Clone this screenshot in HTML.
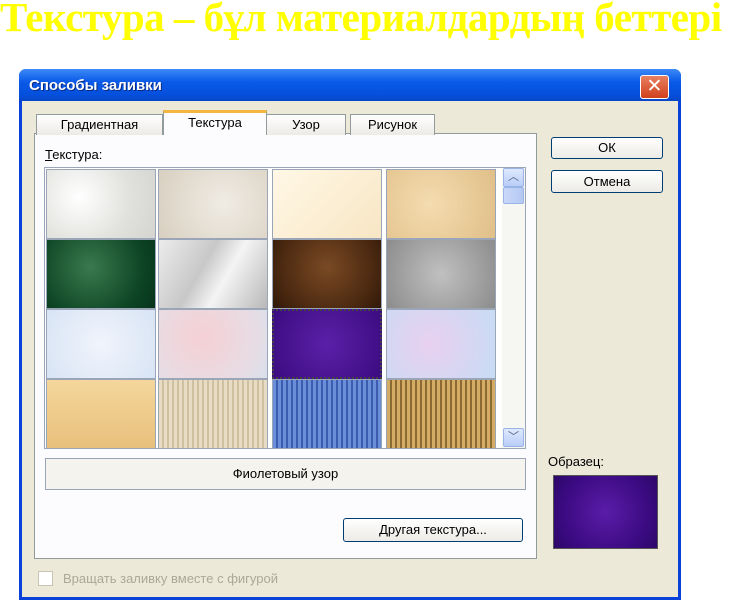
<!DOCTYPE html>
<html><head><meta charset="utf-8"><style>
*{margin:0;padding:0;box-sizing:border-box}
body{width:733px;height:600px;background:#fff;position:relative;overflow:hidden;font-family:"Liberation Sans","DejaVu Sans",sans-serif}
.ab{position:absolute}
.h{left:0;top:-7px;font:bold 41px "Liberation Serif",serif;color:#ffff00;white-space:nowrap;letter-spacing:-0.5px}
.dlg{left:19px;top:69px;width:662px;height:531px;background:#0842d8;border-radius:7px 7px 0 0}
.tb{left:19px;top:69px;width:662px;height:32px;border-radius:7px 7px 0 0;background:linear-gradient(#3d8af7,#0a5ae8 40%,#0550dc 80%,#0646c6)}
.tt{left:29px;top:77px;color:#fff;font-weight:bold;font-size:15px;text-shadow:1px 1px #0a2a80}
.x{left:640px;top:75px;width:29px;height:24px;background:linear-gradient(#e88060,#d0401c);border:1px solid #fff;border-radius:3px;color:#fff;font-size:19px;font-weight:bold;text-align:center;line-height:21px}
.bd{left:22px;top:101px;width:656px;height:496px;background:#ece9d8}
.panel{left:34px;top:133px;width:503px;height:426px;background:#fcfcfe;border:1px solid #919b9c}
.tab{top:114px;height:21px;background:linear-gradient(#fff,#ecebe6);border:1px solid #919b9c;border-bottom:none;font-size:13px;text-align:center;line-height:20px;color:#000}
.tab.act{top:110px;height:25px;background:#fcfcfe;border-top:3px solid #f3b63e}
.cell{width:110px;height:70px;border:1px solid #9aa6b8}
.btn{background:linear-gradient(#fff,#ecebe6);border:1px solid #003c74;border-radius:3px;font-size:13px;text-align:center}
</style></head><body>
<div class="ab h">Текстура – бұл материалдардың беттері</div>
<div class="ab dlg"></div>
<div class="ab tb"></div>
<div class="ab tt">Способы заливки</div>
<div class="ab x">✕</div>
<div class="ab bd"></div>
<div class="ab panel"></div>
<div class="ab tab" style="left:36px;width:127px">Градиентная</div>
<div class="ab tab" style="left:266px;width:80px">Узор</div>
<div class="ab tab" style="left:350px;width:85px">Рисунок</div>
<div class="ab tab act" style="left:163px;width:104px;line-height:20px">Текстура</div>
<div class="ab" style="left:45px;top:147px;font-size:13px"><u>Т</u>екстура:</div>
<div class="ab" style="left:44px;top:167px;width:482px;height:282px;border:1px solid #9aa6b8;background:#fff"></div>
<div class="ab cell" style="left:46px;top:169px;background:radial-gradient(circle at 30% 40%,#fff,#e0e0dc 60%,#d4d4d0)"></div>
<div class="ab cell" style="left:158px;top:169px;background:radial-gradient(circle at 60% 50%,#f0ece4,#d8cfc0)"></div>
<div class="ab cell" style="left:272px;top:169px;background:linear-gradient(135deg,#fff8e6,#f8e6c4)"></div>
<div class="ab cell" style="left:386px;top:169px;background:radial-gradient(circle at 40% 50%,#f4dcb0,#e0bf88)"></div>
<div class="ab cell" style="left:46px;top:239px;background:radial-gradient(circle at 40% 40%,#3a7a4e,#0c4424 70%,#08341c)"></div>
<div class="ab cell" style="left:158px;top:239px;background:linear-gradient(120deg,#ececec,#c8c8c8 40%,#f4f4f4 60%,#b8b8b8)"></div>
<div class="ab cell" style="left:272px;top:239px;background:radial-gradient(circle at 50% 40%,#7a4a24,#4a2810 70%,#301808)"></div>
<div class="ab cell" style="left:386px;top:239px;background:radial-gradient(circle,#c0c0c0,#8c8c8c)"></div>
<div class="ab cell" style="left:46px;top:309px;background:radial-gradient(circle,#f0f4fc,#d8e4f4)"></div>
<div class="ab cell" style="left:158px;top:309px;background:radial-gradient(circle at 40% 40%,#f4d0d4,#e8dce4 70%,#d8e0ec)"></div>
<div class="ab cell" style="left:272px;top:309px;background:radial-gradient(circle,#5a20a8,#3c0c80);border:2px dotted #444"></div>
<div class="ab cell" style="left:386px;top:309px;background:radial-gradient(circle at 40% 50%,#e8d0f0,#c8dcf4)"></div>
<div class="ab cell" style="left:46px;top:379px;background:linear-gradient(#f4d69c,#e8c07c)"></div>
<div class="ab cell" style="left:158px;top:379px;background:repeating-linear-gradient(90deg,#e8dcc4 0 3px,#cfc0a0 3px 5px)"></div>
<div class="ab cell" style="left:272px;top:379px;background:repeating-linear-gradient(90deg,#6a8ed8 0 3px,#3c5cb0 3px 5px)"></div>
<div class="ab cell" style="left:386px;top:379px;background:repeating-linear-gradient(90deg,#d4ac64 0 3px,#8c6a34 3px 5px)"></div>
<div class="ab" style="left:502px;top:168px;width:23px;height:280px;background:#f6f6f2"></div>
<div class="ab" style="left:503px;top:168px;width:21px;height:19px;background:linear-gradient(#dfe9fd,#b8cdf7);border:1px solid #9ab4e8;border-radius:2px;color:#4d6185;font-size:11px;text-align:center;line-height:17px">︿</div>
<div class="ab" style="left:503px;top:187px;width:21px;height:17px;background:linear-gradient(90deg,#cad8f8,#b4c8f4);border:1px solid #9ab4e8;border-radius:2px"></div>
<div class="ab" style="left:503px;top:428px;width:21px;height:19px;background:linear-gradient(#dfe9fd,#b8cdf7);border:1px solid #9ab4e8;border-radius:2px;color:#4d6185;font-size:11px;text-align:center;line-height:17px">﹀</div>
<div class="ab" style="left:45px;top:458px;width:481px;height:32px;border:1px solid #9aa6b8;background:#f4f3ee;font-size:13px;text-align:center;line-height:30px">Фиолетовый узор</div>
<div class="ab btn" style="left:343px;top:518px;width:180px;height:24px;line-height:22px"><u>Д</u>ругая текстура...</div>
<div class="ab btn" style="left:551px;top:137px;width:112px;height:22px;line-height:20px">ОК</div>
<div class="ab btn" style="left:551px;top:170px;width:112px;height:23px;line-height:21px">Отмена</div>
<div class="ab" style="left:548px;top:454px;font-size:13px">Образец:</div>
<div class="ab" style="left:553px;top:475px;width:105px;height:74px;border:1px solid #555;background:radial-gradient(circle at 50% 50%,#5a1ca8,#3a0a80 70%,#2c0868)"></div>
<div class="ab" style="left:38px;top:571px;width:15px;height:15px;border:1px solid #c8c4b4;background:#fff"></div>
<div class="ab" style="left:63px;top:571px;font-size:13px;color:#aca899">Вращать заливку вместе с фигурой</div>
</body></html>
